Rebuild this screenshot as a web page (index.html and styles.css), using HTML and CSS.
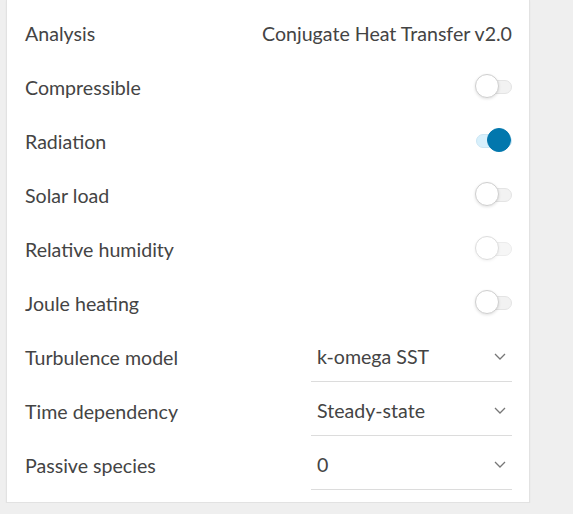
FILE: index.html
```html
<!DOCTYPE html>
<html>
<head>
<meta charset="utf-8">
<link rel="stylesheet" href="styles.css">
</head>
<body>
<div class="page">
  <div class="card">
    <div class="row">
      <span class="label">Analysis</span>
      <span class="value">Conjugate Heat Transfer v2.0</span>
    </div>
    <div class="row">
      <span class="label">Compressible</span>
      <span class="toggle"><span class="track"></span><span class="knob"></span></span>
    </div>
    <div class="row">
      <span class="label">Radiation</span>
      <span class="toggle on"><span class="track"></span><span class="knob"></span></span>
    </div>
    <div class="row">
      <span class="label">Solar load</span>
      <span class="toggle"><span class="track"></span><span class="knob"></span></span>
    </div>
    <div class="row">
      <span class="label">Relative humidity</span>
      <span class="toggle disabled"><span class="track"></span><span class="knob"></span></span>
    </div>
    <div class="row">
      <span class="label">Joule heating</span>
      <span class="toggle"><span class="track"></span><span class="knob"></span></span>
    </div>
    <div class="row">
      <span class="label">Turbulence model</span>
      <div class="select"><span>k-omega SST</span>
        <svg class="chev" width="12" height="7" viewBox="0 0 12 7"><path d="M1 1 L6 6 L11 1" fill="none" stroke="#777" stroke-width="1.3"/></svg>
      </div>
    </div>
    <div class="row">
      <span class="label">Time dependency</span>
      <div class="select"><span>Steady-state</span>
        <svg class="chev" width="12" height="7" viewBox="0 0 12 7"><path d="M1 1 L6 6 L11 1" fill="none" stroke="#777" stroke-width="1.3"/></svg>
      </div>
    </div>
    <div class="row">
      <span class="label">Passive species</span>
      <div class="select"><span>0</span>
        <svg class="chev" width="12" height="7" viewBox="0 0 12 7"><path d="M1 1 L6 6 L11 1" fill="none" stroke="#777" stroke-width="1.3"/></svg>
      </div>
    </div>
  </div>
</div>
</body>
</html>
```

FILE: styles.css
```css
html, body {
  margin: 0;
  padding: 0;
  background: #efefef;
  font-family: Lato, "Open Sans", sans-serif;
}
.page {
  padding: 0 43px 0 6px;
  width: 524px;
}
.card {
  background: #fff;
  border: 1px solid #e2e2e2;
  border-top: none;
  padding: 6px 17px 10px 18px;
  box-shadow: 0 1px 2px rgba(0,0,0,0.04);
}
.row {
  height: 54px;
  display: flex;
  align-items: center;
  justify-content: space-between;
  font-size: 19.6px;
  color: #444;
}
.toggle {
  position: relative;
  width: 37px;
  height: 26px;
  display: inline-block;
}
.track {
  position: absolute;
  left: 1px;
  right: 0;
  top: 6px;
  height: 12px;
  border-radius: 7px;
  background: #f2f2f2;
  border: 1px solid #e4e4e4;
}
.knob {
  position: absolute;
  left: 0;
  top: 0;
  width: 22px;
  height: 22px;
  border-radius: 50%;
  background: #fff;
  border: 1px solid #cfcfcf;
  box-shadow: 0 1px 3px rgba(0,0,0,0.12);
}
.toggle.disabled .knob {
  border-color: #dddddd;
  box-shadow: 0 1px 3px rgba(0,0,0,0.06);
}
.toggle.disabled .track {
  background: #f6f6f6;
  border-color: #ececec;
}
.toggle.on .track {
  background: #d8f0fc;
  border-color: #cbe6f4;
}
.toggle.on .knob {
  left: 12px;
  background: #0277ad;
  border-color: #0277ad;
  box-shadow: none;
}
.select {
  width: 201px;
  height: 48px;
  box-sizing: border-box;
  border-bottom: 1px solid #dcdcdc;
  display: flex;
  align-items: center;
  justify-content: space-between;
  padding: 0 6px 2px 6px;
  align-self: flex-end;
  margin-bottom: 2px;
}
.chev {
  display: block;
}
```
